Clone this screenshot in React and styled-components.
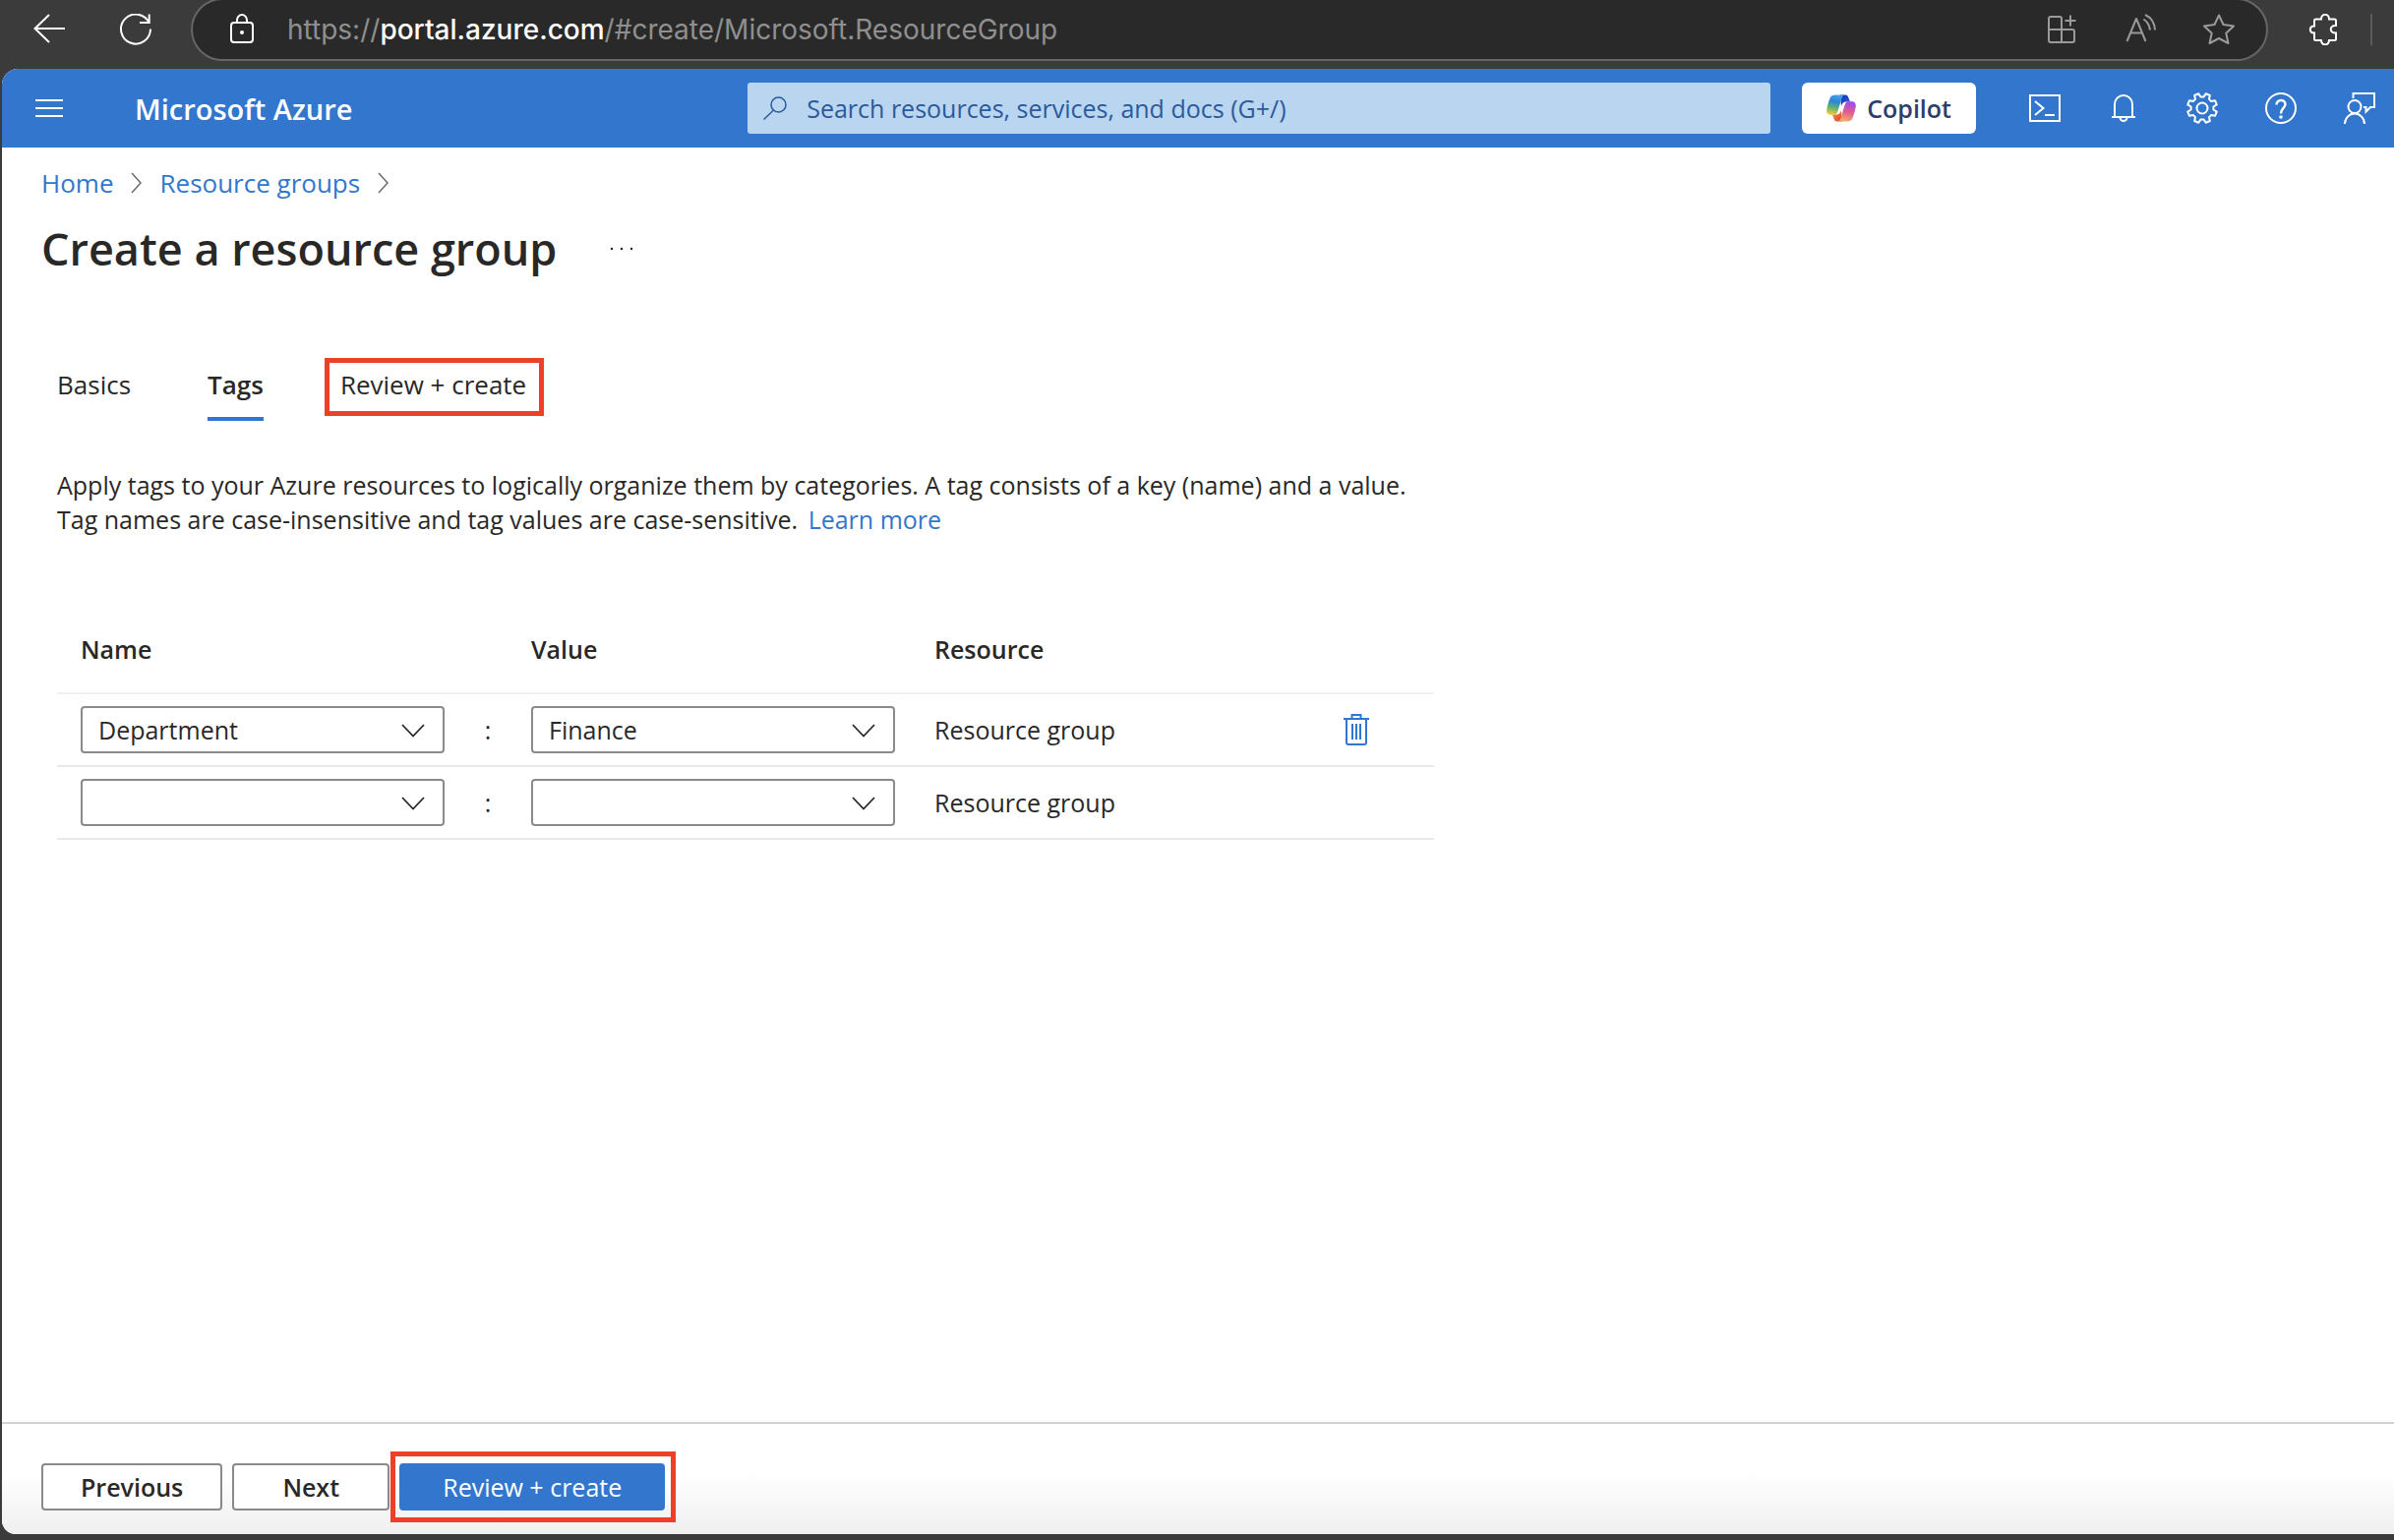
import React, { useState } from "react";
import styled, { createGlobalStyle } from "styled-components";

const GlobalStyle = createGlobalStyle`
  * {
    box-sizing: border-box;
  }

  body {
    margin: 0;
    background: #3b3b3b;
    color: #292827;
    font-family: "Open Sans", "Noto Sans", sans-serif;
    font-size: 25px;
    line-height: 35px;
  }

  button, input, select {
    font: inherit;
    color: inherit;
  }

  a {
    color: #3376cd;
    text-decoration: none;
  }
`

const Window = styled.div`
  display: flex;
  flex-direction: column;
  min-height: 100vh;
  padding-bottom: 6px;
`

const IconButton = styled.button`
  display: flex;
  flex: none;
  padding: 0;
  border: 0;
  background: none;
  color: ${props => props.$color || '#fff'};
  cursor: pointer;
`

const Svg = styled.svg`
  display: block;
  flex: none;
  fill: none;
  stroke: currentColor;
  stroke-width: 2;
`

/* browser bar */

const BrowserBar = styled.div`
  display: flex;
  align-items: center;
  height: 70px;
  padding: 0 22px 10px 34px;
  overflow: hidden;
`

const NavButtons = styled.div`
  display: flex;
  gap: 56px;
  margin-right: 40px;
`

const AddressBar = styled.div`
  display: flex;
  flex: 1;
  align-items: center;
  min-width: 0;
  height: 64px;
  padding: 0 32px 0 34px;
  border: 2px solid #666;
  border-radius: 32px;
  background: #292929;
  color: #fff;
`

const Url = styled.div`
  flex: 1;
  margin-left: 30px;
  overflow: hidden;
  color: #8f8f8f;
  font-family: Inter, sans-serif;
  font-size: 28px;
  white-space: nowrap;

  b {
    color: #fff;
    font-weight: 500;
  }
`

const AddressActions = styled.div`
  display: flex;
  gap: 48px;
`

const Extensions = styled.div`
  display: flex;
  gap: 32px;
  margin-left: 40px;
`

const Divider = styled.div`
  width: 2px;
  height: 32px;
  background: #5b5b5b;
`

/* portal */

const Portal = styled.div`
  display: flex;
  flex: 1;
  flex-direction: column;
  margin-left: 2px;
  overflow: hidden;
  border-radius: 16px 0 0 14px;
  background: #fff;
`

const Header = styled.header`
  display: flex;
  align-items: center;
  height: 80px;
  padding: 0 19px 0 32px;
  background: #3376cd;
  color: #fff;
`

const Brand = styled.a`
  margin: 0 auto 0 71px;
  color: #fff;
  font-size: 29px;
  font-weight: 600;
  white-space: nowrap;
`

const SearchBox = styled.label`
  display: flex;
  flex: 0 1 1040px;
  align-items: center;
  gap: 19px;
  height: 52px;
  padding: 0 16px;
  border-radius: 3px;
  background: #b9d5f0;
  color: #2b5a9b;
`

const SearchInput = styled.input`
  flex: 1;
  min-width: 0;
  padding: 0;
  border: 0;
  outline: 0;
  background: none;

  &::placeholder {
    color: #2b5a9b;
    opacity: 1;
  }
`

const CopilotButton = styled.button`
  display: flex;
  flex: none;
  align-items: center;
  gap: 11px;
  height: 52px;
  margin: 0 54px 0 32px;
  padding: 0 25px;
  border: 0;
  border-radius: 6px;
  background: #fff;
  color: #2c3e6b;
  font-weight: 600;
`

const HeaderActions = styled.div`
  display: flex;
  gap: 48px;
`

const Main = styled.main`
  flex: 1;
  padding: 18px 40px;
`

const Breadcrumb = styled.nav`
  display: flex;
  align-items: center;
  gap: 18px;
  color: #6b6b6b;
  font-size: 26px;
  line-height: 36px;
`

const TitleRow = styled.div`
  display: flex;
  align-items: center;
  gap: 54px;
  margin-top: 18px;
`

const Title = styled.h1`
  margin: 0;
  font-size: 45px;
  font-weight: 600;
  line-height: 62px;
`

const Tabs = styled.div`
  display: flex;
  gap: 78px;
  margin: 86px 16px 0;
`

const Tab = styled.button`
  position: relative;
  height: 58px;
  padding: 0 0 12px;
  border: 0;
  border-bottom: 4px solid ${props => props.$active ? '#3376cd' : 'transparent'};
  background: none;
  font-size: 26px;
  font-weight: ${props => props.$active ? 600 : 400};
  line-height: 42px;
  cursor: pointer;
`

const Highlight = styled.span`
  position: absolute;
  inset: ${props => props.$inset};
  border: 5px solid #ec4127;
  pointer-events: none;
`

const Intro = styled.p`
  max-width: 1400px;
  margin: 48px 16px 0;

  a {
    margin-left: 4px;
  }
`

const TagTable = styled.table`
  width: 1400px;
  max-width: 100%;
  margin: 84px 16px 0;
  border-collapse: collapse;
  table-layout: fixed;
`

const HeadCell = styled.th`
  width: ${props => props.$width || 'auto'};
  height: 75px;
  padding: 0 0 14px ${props => props.$indent || '0'};
  border-bottom: 2px solid #f0f0f0;
  font-weight: 600;
  text-align: left;
`

const Cell = styled.td`
  height: 74px;
  padding: 0 0 0 ${props => props.$indent || '0'};
  border-bottom: 2px solid #e9e9e9;
  text-align: ${props => props.$align || 'left'};
`

const SelectBox = styled.div`
  position: relative;
`

const Select = styled.select`
  display: block;
  width: 100%;
  height: 48px;
  padding: 0 56px 0 16px;
  border: 2px solid #8a8a8a;
  border-radius: 4px;
  background: #fff;
  appearance: none;
`

const SelectArrow = styled(Svg)`
  position: absolute;
  top: 18px;
  right: 20px;
  pointer-events: none;
`

const Footer = styled.footer`
  display: flex;
  gap: 10px;
  padding: 40px 40px 24px;
  border-top: 2px solid #d2d2d2;
  background: linear-gradient(#fff 45%, #efefef);
`

const FooterButton = styled.button`
  position: relative;
  min-width: 160px;
  height: 48px;
  padding: 0 ${props => props.$primary ? '42px' : '38px'};
  border: 2px solid ${props => props.$primary ? '#3376cd' : '#8a8a8a'};
  border-radius: 4px;
  background: ${props => props.$primary ? '#3376cd' : '#fff'};
  color: ${props => props.$primary ? '#fff' : '#292827'};
  font-weight: ${props => props.$primary ? 500 : 600};
  line-height: 44px;
  cursor: pointer;
`

const Icon = ({ children, width = 32, height = 32, as: Tag = Svg, ...rest }) => (
  <Tag width={width} height={height} viewBox={`0 0 ${width} ${height}`} aria-hidden="true" {...rest}>
    {children}
  </Tag>
);

// eight teeth, with a gap at the top
const gearPath = () => {
  const points = [];
  for (let i = 0; i < 8; i++) {
    const middle = i * 45 + 22.5;
    [[-15, 11.5], [-8.5, 15.2], [8.5, 15.2], [15, 11.5]].forEach(([offset, radius]) => {
      const angle = (middle + offset) * Math.PI / 180;
      points.push(`${(16 + radius * Math.sin(angle)).toFixed(2)} ${(16 - radius * Math.cos(angle)).toFixed(2)}`);
    });
  }
  return `M${points.join('L')}Z`;
};

const CopilotLogo = () => (
  <svg width="30" height="28" viewBox="0 0 30 28" aria-hidden="true">
    <defs>
      <linearGradient id="cool" x1="0.6" y1="0" x2="0.4" y2="1">
        <stop offset="0" stopColor="#42a5ee" />
        <stop offset="0.35" stopColor="#2f84d6" />
        <stop offset="0.65" stopColor="#5bb174" />
        <stop offset="1" stopColor="#f3c83b" />
      </linearGradient>
      <linearGradient id="warm" x1="0.6" y1="0" x2="0.4" y2="1">
        <stop offset="0" stopColor="#9a4df0" />
        <stop offset="0.5" stopColor="#dd5c93" />
        <stop offset="1" stopColor="#f8ad62" />
      </linearGradient>
      <linearGradient id="foldTop" x1="0" y1="0" x2="1" y2="1">
        <stop offset="0" stopColor="#1c2fb0" />
        <stop offset="1" stopColor="#2a6be0" />
      </linearGradient>
      <linearGradient id="foldBottom" x1="0" y1="0" x2="1" y2="1">
        <stop offset="0" stopColor="#f5a04a" />
        <stop offset="1" stopColor="#d9412f" />
      </linearGradient>
    </defs>
    <path fill="url(#foldTop)" d="M14 0.5H19C21.5 0.5 22.3 2.5 23 5C23.6 7 24.3 7.4 26 7.4H20C17 7.4 16 9 15 12Z" />
    <path fill="url(#foldBottom)" d="M16 27.5H11C8.5 27.5 7.7 25.5 7 23C6.4 21 5.7 20.6 4 20.6H10C13 20.6 14 19 15 16Z" />
    <path fill="url(#cool)" d="M9 0.5H19C16.8 0.5 16 2.5 15.2 5L11.5 17C10.6 19.8 9.5 20.8 7 20.8H4C0.8 20.8 -0.4 18.2 0.4 14.5C1.2 10.5 2.4 6.5 3.5 4C4.6 1.4 6.2 0.5 9 0.5Z" />
    <path fill="url(#warm)" d="M21 27.5H11C13.2 27.5 14 25.5 14.8 23L18.5 11C19.4 8.2 20.5 7.2 23 7.2H26C29.2 7.2 30.4 9.8 29.6 13.5C28.8 17.5 27.6 21.5 26.5 24C25.4 26.6 23.8 27.5 21 27.5Z" />
  </svg>
);

const Crumb = () => (
  <Icon width={11} height={22}>
    <path strokeWidth="1.5" d="M1 1L10 11L1 21" />
  </Icon>
);

const TagSelect = ({ label, value, onChange, options }) => (
  <SelectBox>
    <Select aria-label={label} value={value} onChange={e => onChange(e.target.value)}>
      <option value=""></option>
      {options.map(option => <option key={option}>{option}</option>)}
    </Select>
    <Icon as={SelectArrow} width={24} height={14}>
      <path strokeWidth="1.8" d="M1 1L12 12.5L23 1" />
    </Icon>
  </SelectBox>
);

const App = () => {
  const [tab, setTab] = useState('Tags');
  const [tags, setTags] = useState([
    { name: 'Department', value: 'Finance' },
    { name: '', value: '' },
  ]);

  const update = (index, key, text) => {
    setTags(tags.map((tag, i) => i === index ? { ...tag, [key]: text } : tag));
  };

  return (
    <Window>
      <GlobalStyle />

      <BrowserBar>
        <NavButtons>
          <IconButton aria-label="Back">
            <Icon><path d="M32 15H1.5M16 1L1.5 15L16 29" /></Icon>
          </IconButton>
          <IconButton aria-label="Reload">
            <Icon><path d="M31 15.5A15 15 0 1 1 29.5 9M29.7 0.5V9H20" /></Icon>
          </IconButton>
        </NavButtons>
        <AddressBar>
          <Icon>
            <rect x="5" y="9" width="22" height="20" rx="3" />
            <path d="M11 9V6.5a5 5.5 0 0 1 10 0V9" />
            <circle cx="16" cy="19" r="2" fill="currentColor" stroke="none" />
          </Icon>
          <Url>https://<b>portal.azure.com</b>/#create/Microsoft.ResourceGroup</Url>
          <AddressActions>
            <IconButton $color="#9a9a9a" aria-label="App available">
              <Icon>
                <path d="M16 16V5a2 2 0 0 0-2-2H5a2 2 0 0 0-2 2V27a2 2 0 0 0 2 2H27a2 2 0 0 0 2-2V18a2 2 0 0 0-2-2H3M16 16V29M25 1.5V12.5M19.5 7H30.5" />
              </Icon>
            </IconButton>
            <IconButton $color="#9a9a9a" aria-label="Read aloud">
              <Icon>
                <path strokeLinejoin="round" d="M2.5 28L12 5L21.5 28M6 19.5H18M19.3 5.5Q25 9 26 16.5M21 1Q30.5 5.5 31 16.5" />
              </Icon>
            </IconButton>
            <IconButton $color="#9a9a9a" aria-label="Add to favorites">
              <Icon>
                <path strokeLinejoin="round" d="M16 1.5L20.5 11L31 12.5L23.3 19.8L25.5 30L16 25L6.5 30L8.7 19.8L1 12.5L11.5 11Z" />
              </Icon>
            </IconButton>
          </AddressActions>
        </AddressBar>
        <Extensions>
          <IconButton aria-label="Extensions">
            <Icon>
              <path d="M8.5 5.5H14C14 -0.7 22 -0.7 22 5.5H27.5Q29 5.5 29 7V12C22 11.5 22 20 29 19.5V25.5Q29 27 27.5 27H22C21.5 32.8 14.5 32.8 14 27H8.5Q7 27 7 25.5V19.5C1.5 19.5 1.5 12.5 7 12.5V7Q7 5.5 8.5 5.5Z" />
            </Icon>
          </IconButton>
          <Divider />
        </Extensions>
      </BrowserBar>

      <Portal>
        <Header>
          <IconButton aria-label="Show portal menu">
            <Icon><path d="M2 8H30M2 16H30M2 24H30" /></Icon>
          </IconButton>
          <Brand href="#home">Microsoft Azure</Brand>
          <SearchBox>
            <Icon width={25} height={24}>
              <circle cx="15.5" cy="8.5" r="7.5" strokeWidth="1.5" />
              <path strokeWidth="1.5" d="M10.5 14L0.5 23.5" />
            </Icon>
            <SearchInput aria-label="Search" placeholder="Search resources, services, and docs (G+/)" />
          </SearchBox>
          <CopilotButton>
            <CopilotLogo />
            Copilot
          </CopilotButton>
          <HeaderActions>
            <IconButton aria-label="Cloud Shell">
              <Icon>
                <rect x="1" y="3" width="30" height="26" />
                <path d="M6 9L14.5 16L6 23M16 23H26" />
              </Icon>
            </IconButton>
            <IconButton aria-label="Notifications">
              <Icon>
                <path d="M4 25H28M7 25V12A9 9 0 0 1 25 12V25M12.5 25.5a3.5 3.5 0 0 0 7 0" />
              </Icon>
            </IconButton>
            <IconButton aria-label="Settings">
              <Icon>
                <path strokeLinejoin="round" d={gearPath()} />
                <circle cx="16" cy="16" r="5.5" />
              </Icon>
            </IconButton>
            <IconButton aria-label="Help">
              <Icon>
                <circle cx="16" cy="16" r="15" />
                <path strokeWidth="2.4" d="M11.5 12.5C11.5 6.5 20.5 6.5 20.5 12C20.5 16 16 16 16 21.5" />
                <circle cx="16" cy="25" r="1.8" fill="currentColor" stroke="none" />
              </Icon>
            </IconButton>
            <IconButton aria-label="Feedback">
              <Icon>
                <path d="M9.5 6V1H31V15H27L22.5 19.5V15H20" />
                <circle cx="11" cy="14.5" r="6.5" />
                <path d="M1 32A10 10.5 0 0 1 21 32" />
              </Icon>
            </IconButton>
          </HeaderActions>
        </Header>

        <Main>
          <Breadcrumb aria-label="Breadcrumb">
            <a href="#home">Home</a>
            <Crumb />
            <a href="#groups">Resource groups</a>
            <Crumb />
          </Breadcrumb>
          <TitleRow>
            <Title>Create a resource group</Title>
            <IconButton $color="#292827" aria-label="More">
              <Icon width={24} height={4}>
                <path strokeLinecap="round" strokeWidth="2.5" d="M2 2h0M12 2h0M22 2h0" />
              </Icon>
            </IconButton>
          </TitleRow>

          <Tabs role="tablist">
            {['Basics', 'Tags', 'Review + create'].map(name => (
              <Tab key={name} role="tab" aria-selected={tab === name} $active={tab === name} onClick={() => setTab(name)}>
                {name}
                {name === 'Review + create' && <Highlight $inset="-6px -18px 1px -16px" />}
              </Tab>
            ))}
          </Tabs>

          <Intro>
            Apply tags to your Azure resources to logically organize them by categories. A tag consists of a key (name) and a value.
            <br />
            Tag names are case-insensitive and tag values are case-sensitive. <a href="#learn">Learn more</a>
          </Intro>

          <TagTable>
            <thead>
              <tr>
                <HeadCell $width="394px" $indent="24px">Name</HeadCell>
                <HeadCell $width="88px" />
                <HeadCell $width="370px">Value</HeadCell>
                <HeadCell $indent="40px">Resource</HeadCell>
                <HeadCell $width="93px" />
              </tr>
            </thead>
            <tbody>
              {tags.map((tag, index) => (
                <tr key={index}>
                  <Cell $indent="24px">
                    <TagSelect label="Name" value={tag.name} onChange={text => update(index, 'name', text)} options={['Department']} />
                  </Cell>
                  <Cell $align="center">:</Cell>
                  <Cell>
                    <TagSelect label="Value" value={tag.value} onChange={text => update(index, 'value', text)} options={['Finance']} />
                  </Cell>
                  <Cell $indent="40px">Resource group</Cell>
                  <Cell>
                    {tag.name && (
                      <IconButton $color="#3376cd" aria-label="Delete tag" onClick={() => setTags(tags.filter((t, i) => i !== index))}>
                        <Icon width={28} height={32}>
                          <path d="M1 5H27M9.5 4V1H18.5V4M4 5V29Q4 31 6 31H22Q24 31 24 29V5M10 10V26M14 10V26M18 10V26" />
                        </Icon>
                      </IconButton>
                    )}
                  </Cell>
                </tr>
              ))}
            </tbody>
          </TagTable>
        </Main>

        <Footer>
          <FooterButton>Previous</FooterButton>
          <FooterButton>Next</FooterButton>
          <FooterButton $primary>
            Review + create
            <Highlight $inset="-14px -13px -14px -11px" />
          </FooterButton>
        </Footer>
      </Portal>
    </Window>
  );
};

export default App;
